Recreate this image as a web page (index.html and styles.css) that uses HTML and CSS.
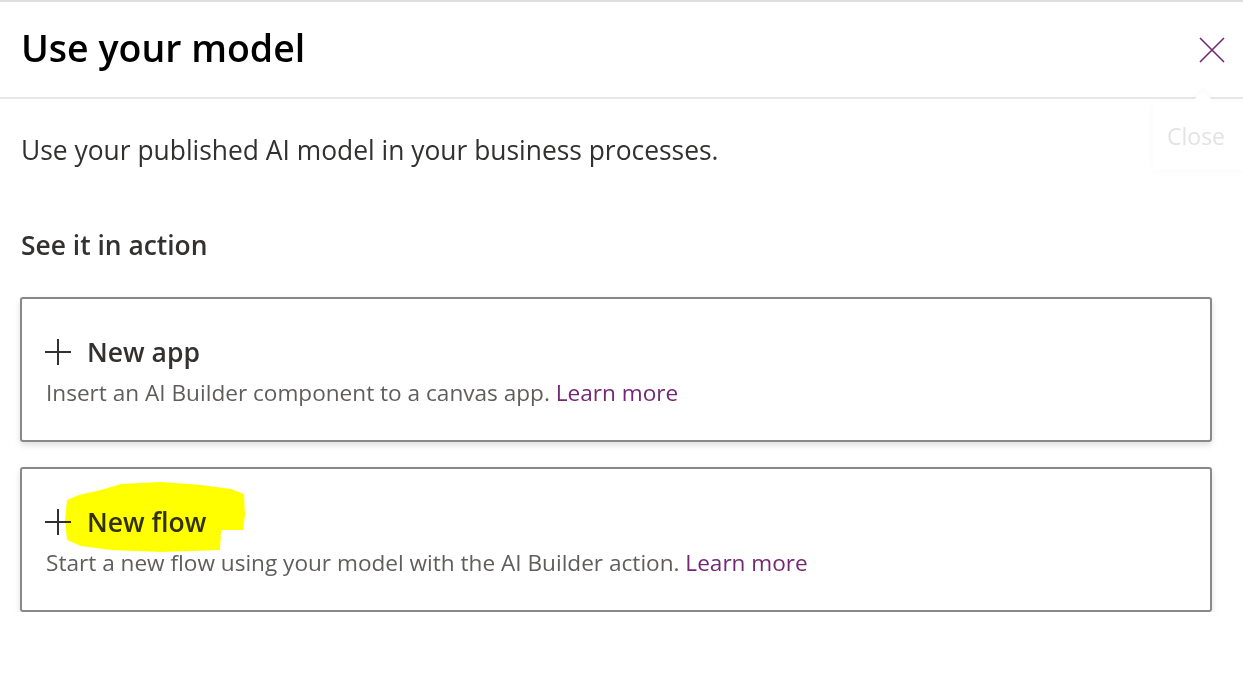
FILE: index.html
```html
<!DOCTYPE html>
<html lang="en">
<head>
<meta charset="utf-8">
<title>Use your model</title>
<link rel="stylesheet" href="styles.css">
</head>
<body>
<div class="panel">
  <header class="header">
    <h1 class="title">Use your model</h1>
    <button class="close" aria-label="Close">
      <svg width="26" height="26" viewBox="0 0 26 26"><path d="M1 1 L25 25 M25 1 L1 25" stroke="#742774" stroke-width="1.6" fill="none"/></svg>
    </button>
  </header>
  <div class="tooltip"><span class="beak"></span>Close</div>
  <main class="content">
    <p class="intro">Use your published AI model in your business processes.</p>
    <h2 class="section">See it in action</h2>
    <div class="card">
      <div class="card-head">
        <svg class="plus" width="26" height="26" viewBox="0 0 26 26"><path d="M13 0 V26 M0 13 H26" stroke="#323130" stroke-width="2" fill="none"/></svg>
        <span class="card-title">New app</span>
      </div>
      <p class="card-desc">Insert an AI Builder component to a canvas app. <a class="link" href="#">Learn more</a></p>
    </div>
    <div class="card">
      <div class="card-head">
        <svg class="plus" width="26" height="26" viewBox="0 0 26 26"><path d="M13 0 V26 M0 13 H26" stroke="#323130" stroke-width="2" fill="none"/></svg>
        <span class="card-title">New flow</span>
      </div>
      <p class="card-desc">Start a new flow using your model with the AI Builder action. <a class="link" href="#">Learn more</a></p>
      <svg class="highlight" width="230" height="90" viewBox="0 0 230 90"><path d="M46 34 L58 29 L80 24 L100 18 L140 16 L180 19 L210 23 L223 28 L224 49 L222 64 L200 64 L199 84 L140 86 L90 84 L60 80 L46 74 L44 54 Z" fill="#ffff00"/></svg>
    </div>
  </main>
</div>
</body>
</html>
```

FILE: styles.css
```css
html, body {
  margin: 0;
  padding: 0;
  background: #ffffff;
}
body {
  font-family: "Open Sans", "Noto Sans", sans-serif;
  color: #323130;
}
.panel {
  border-top: 2px solid #e1dfdd;
  position: relative;
}
.header {
  display: flex;
  align-items: center;
  justify-content: space-between;
  box-sizing: border-box;
  height: 97px;
  padding: 0 18px 4px 21px;
  border-bottom: 2px solid #e8e8e8;
}
.title {
  margin: 0;
  font-size: 37.5px;
  font-weight: 600;
  color: #000000;
  line-height: 50px;
}
.close {
  border: 0;
  background: none;
  padding: 0;
  width: 26px;
  height: 26px;
  display: flex;
  margin-top: 4px;
}
.tooltip {
  position: absolute;
  top: 100px;
  right: -10px;
  width: 86px;
  height: 68px;
  padding-left: 14px;
  display: flex;
  align-items: center;
  font-size: 23px;
  color: #e3e3e3;
  background: #ffffff;
  box-shadow: 0 0 8px rgba(0, 0, 0, 0.03);
}
.beak {
  position: absolute;
  top: -8px;
  left: 42px;
  width: 16px;
  height: 16px;
  background: #ffffff;
  transform: rotate(45deg);
  box-shadow: -2px -2px 4px rgba(0, 0, 0, 0.02);
}
.content {
  padding: 0 31px 0 20px;
}
.intro {
  margin: 33px 0 0;
  padding-left: 1px;
  font-size: 26.4px;
  line-height: 36px;
}
.section {
  margin: 59px 0 0;
  padding-left: 1px;
  font-size: 26.4px;
  font-weight: 600;
  line-height: 36px;
}
.card {
  position: relative;
  margin-top: 34px;
  border: 2px solid #8a8886;
  border-radius: 3px;
  padding: 33px 24px 32px 23px;
  box-shadow: 0 3px 6px rgba(0, 0, 0, 0.13);
}
.card + .card {
  margin-top: 25px;
}
.card-head {
  display: flex;
  align-items: center;
  gap: 16px;
  height: 40px;
}
.card-title {
  font-size: 26.5px;
  font-weight: 600;
  line-height: 40px;
}
.card-desc {
  margin: 6px 0 0;
  padding-left: 1px;
  font-size: 22.6px;
  line-height: 30px;
  color: #605e5c;
}
.link {
  color: #742774;
  text-decoration: none;
}
.highlight {
  position: absolute;
  left: -1px;
  top: -3px;
  mix-blend-mode: multiply;
}
```
